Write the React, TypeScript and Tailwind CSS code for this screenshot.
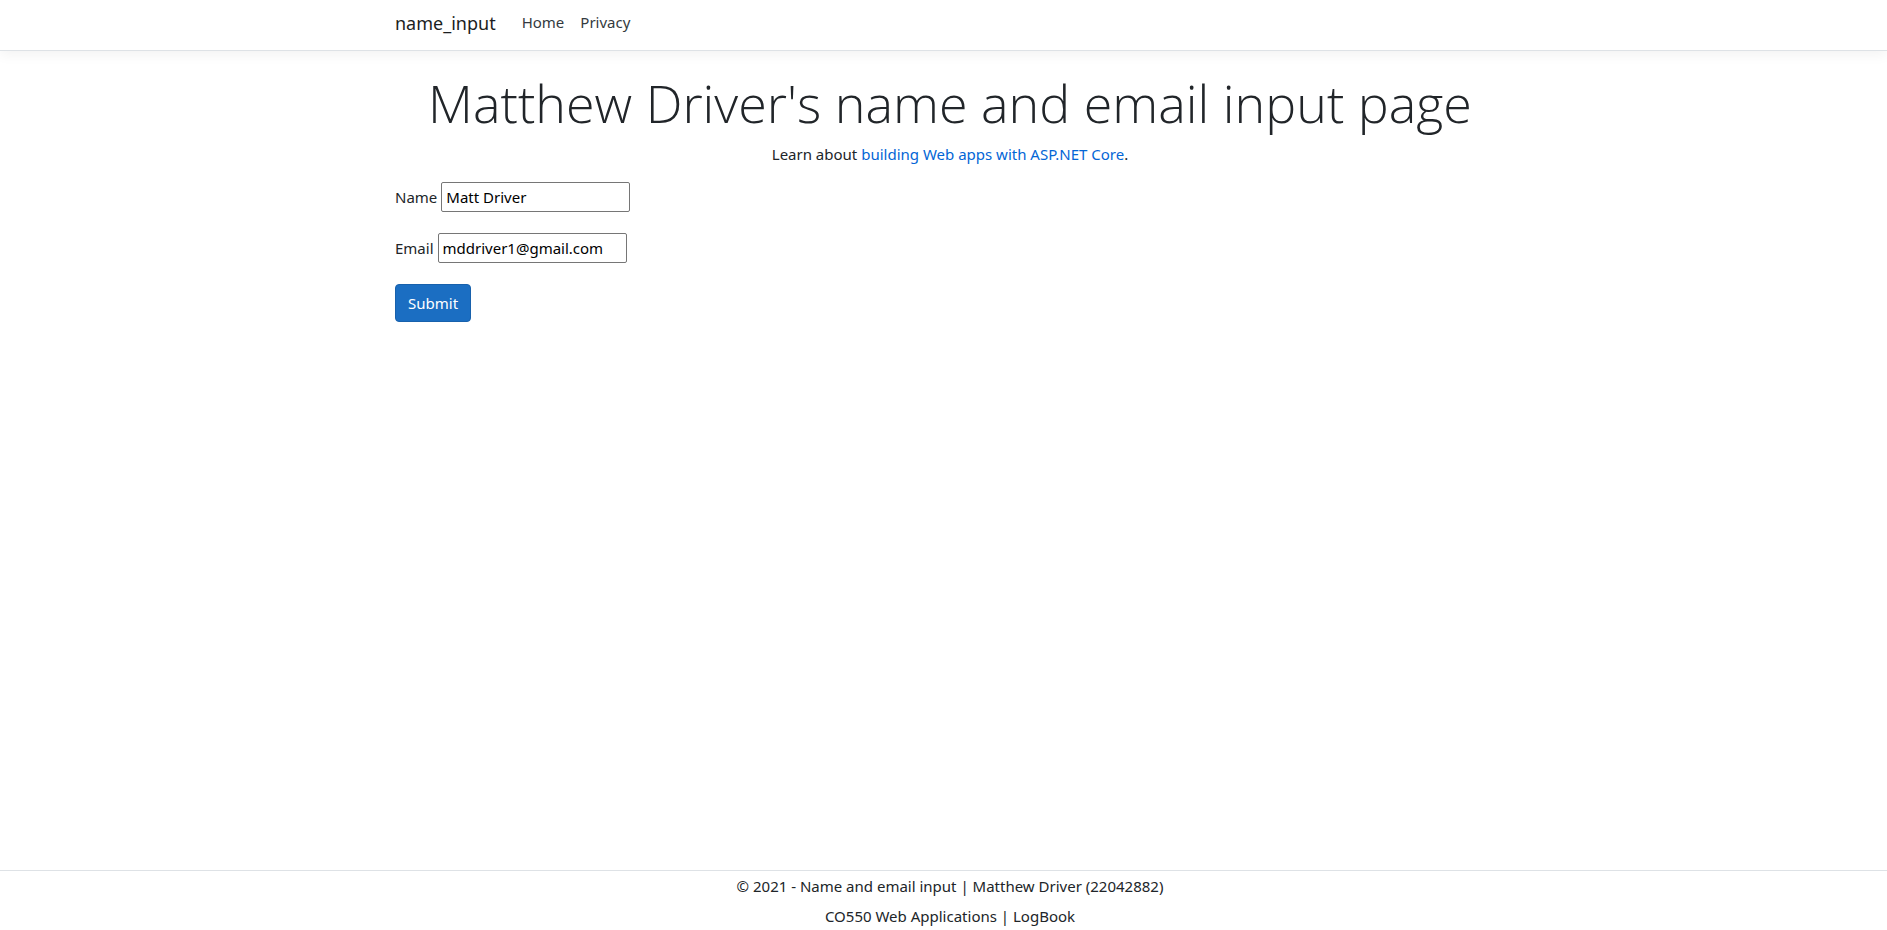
import { useState } from "react";

export default function App() {
  const [name, setName] = useState("Matt Driver");
  const [email, setEmail] = useState("mddriver1@gmail.com");

  return (
    <div className="flex min-h-screen flex-col overflow-x-hidden bg-white font-['Noto_Sans',sans-serif] text-[15px] leading-6 text-[#212529]">
      <header className="border-b border-[#dee2e6] pl-[13px] shadow-[0_4px_12px_rgba(0,0,0,0.05)]">
        <nav className="mx-auto flex max-w-[1140px] items-start px-[15px] pt-2 pb-3">
          <a href="#" className="mr-[26px] text-lg leading-[30px] text-[#1b1e21]">
            name_input
          </a>
          <ul className="flex gap-4 leading-7">
            <li>
              <a href="#home" className="text-[#343a40]">Home</a>
            </li>
            <li>
              <a href="#privacy" className="text-[#343a40]">Privacy</a>
            </li>
          </ul>
        </nav>
      </header>

      <div className="grow pl-[13px]">
        <main className="mx-auto max-w-[1140px] px-[15px] pt-[18px] pb-4">
          <div className="text-center">
            <h1 className="mb-1.5 font-['Open_Sans','Noto_Sans',sans-serif] text-[52px] leading-[67px] font-light">
              Matthew Driver's name and email input page
            </h1>
            <p className="mb-4">
              Learn about{" "}
              <a href="https://docs.microsoft.com/aspnet/core" className="text-[#0366d6]">
                building Web apps with ASP.NET Core
              </a>
              .
            </p>
          </div>
          <form className="flex flex-col items-start gap-[21px]" onSubmit={(e) => e.preventDefault()}>
            <div className="flex items-center gap-1">
              <label htmlFor="name">Name</label>
              <input
                id="name"
                type="text"
                value={name}
                onChange={(e) => setName(e.target.value)}
                className="h-[30px] w-[189px] rounded-xs border border-[#767676] px-1 text-black"
              />
            </div>
            <div className="flex items-center gap-1">
              <label htmlFor="email">Email</label>
              <input
                id="email"
                type="email"
                value={email}
                onChange={(e) => setEmail(e.target.value)}
                className="h-[30px] w-[189px] rounded-xs border border-[#767676] px-1 text-black"
              />
            </div>
            <button
              type="submit"
              className="rounded-sm border border-[#1861ac] bg-[#1b6ec2] px-3 py-1.5 text-white"
            >
              Submit
            </button>
          </form>
        </main>
      </div>

      <footer className="border-t border-[#dee2e6] pt-[3px] pb-0.5 pl-[13px]">
        <div className="mx-auto flex max-w-[1140px] flex-col gap-1.5 px-[15px] text-center">
          <p>&copy; 2021 - Name and email input | Matthew Driver (22042882)</p>
          <p>CO550 Web Applications | LogBook</p>
        </div>
      </footer>
    </div>
  );
}
